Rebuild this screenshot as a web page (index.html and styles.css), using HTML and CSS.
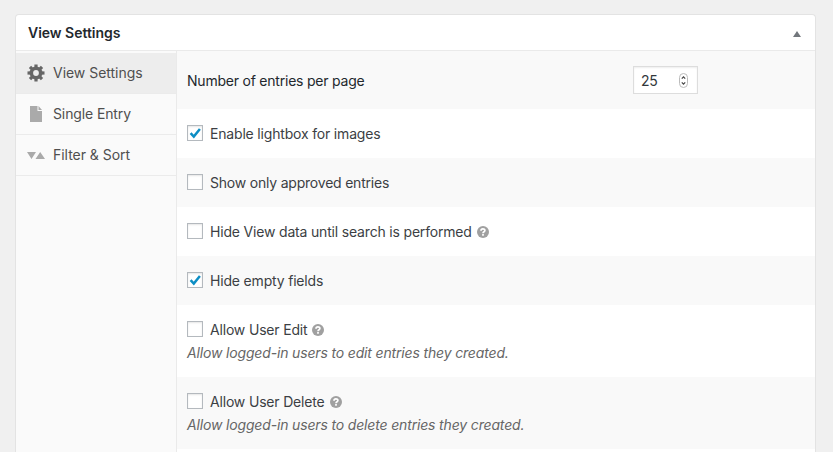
FILE: index.html
```html
<!DOCTYPE html>
<html lang="en">
<head>
<meta charset="utf-8">
<title>View Settings</title>
<link rel="stylesheet" href="styles.css">
</head>
<body>
<svg class="defs" width="0" height="0">
  <symbol id="help" viewBox="0 0 12 12"><circle cx="6" cy="6" r="6" fill="#a0a0a0"/><path d="M4 4.7C4 2.3 7.9 2.4 7.9 4.5C7.9 5.8 6 5.7 6 7.2M6 8.1V9.8" fill="none" stroke="#fff" stroke-width="1.7"/></symbol>
  <symbol id="check" viewBox="0 0 14 14"><path d="M2.6 7.1L5.8 10.5L11.9 3" fill="none" stroke="#0d8ec4" stroke-width="2.5"/></symbol>
</svg>
<section class="postbox">
  <header class="head"><h2>View Settings</h2><span class="toggle"></span></header>
  <div class="body">
    <nav class="tabs">
      <a class="tab active"><svg width="18" height="18" viewBox="0 0 18 18"><g fill="#666"><rect id="tooth" x="7.4" y=".5" width="3.2" height="17"/><use href="#tooth" transform="rotate(45 9 9)"/><use href="#tooth" transform="rotate(90 9 9)"/><use href="#tooth" transform="rotate(135 9 9)"/><circle cx="9" cy="9" r="6.5"/></g><circle cx="9" cy="9" r="2.9" fill="#ededed"/></svg><span>View Settings</span></a>
      <a class="tab"><svg width="18" height="18" viewBox="0 0 18 18"><path d="M3 1H10.5V6H15V17H3ZM11.5 1L15 5H11.5Z" fill="#aaa"/></svg><span class="entry">Single Entry</span></a>
      <a class="tab"><svg width="18" height="18" viewBox="0 0 18 18"><path d="M0 6H9L4.5 13ZM8.5 13L13.2 6L18 13Z" fill="#aaa"/></svg><span>Filter &amp; Sort</span></a>
    </nav>
    <div class="rows">
      <div class="row number"><label>Number of entries per page</label><div class="field"><span>25</span><svg width="9" height="15" viewBox="0 0 9 15"><rect x=".5" y=".5" width="8" height="14" rx="4" fill="#fff" stroke="#bbb"/><path d="M2.8 5.6L4.5 3.8L6.2 5.6M2.8 9.4L4.5 11.2L6.2 9.4" fill="none" stroke="#444" stroke-width="1.2"/></svg></div></div>
      <div class="row"><label><i class="box"><svg width="14" height="14"><use href="#check"/></svg></i><span>Enable lightbox for images</span></label></div>
      <div class="row"><label><i class="box"></i><span class="approved">Show only approved entries</span></label></div>
      <div class="row"><label><i class="box"></i><span>Hide View data until search is performed</span><svg class="help" width="12" height="12"><use href="#help"/></svg></label></div>
      <div class="row"><label><i class="box"><svg width="14" height="14"><use href="#check"/></svg></i><span>Hide empty fields</span></label></div>
      <div class="row tall"><label><i class="box"></i><span>Allow User Edit</span><svg class="help" width="12" height="12"><use href="#help"/></svg></label><p>Allow logged-in users to edit entries they created.</p></div>
      <div class="row tall"><label><i class="box"></i><span>Allow User Delete</span><svg class="help" width="12" height="12"><use href="#help"/></svg></label><p>Allow logged-in users to delete entries they created.</p></div>
    </div>
  </div>
</section>
</body>
</html>
```
FILE: styles.css
```css
* { box-sizing: border-box; }
body { margin: 0; padding: 14px 17px 0 15px; height: 452px; overflow: hidden; background: #f0f0f0; font: 14px/20px Inter, "Liberation Sans", sans-serif; letter-spacing: -.18px; color: #3c3f44; white-space: nowrap; }
svg { display: block; flex: none; }
.defs { position: absolute; }
.postbox { height: 438px; border: 1px solid #e3e3e3; border-bottom: 0; border-radius: 4px 4px 0 0; background: #fff; overflow: hidden; }
.head { height: 36px; border-bottom: 1px solid #eaeaea; padding: 0 14px 0 12px; display: flex; align-items: center; justify-content: space-between; }
h2 { margin: 0; font-size: 14px; line-height: 20px; font-weight: 600; letter-spacing: -.02px; color: #23282d; }
.toggle { border: 4px solid transparent; border-top: 0; border-bottom: 6px solid #72777c; margin-top: 3px; }
.body { display: flex; height: 401px; }
.tabs { width: 161px; padding-top: 2px; background: #fafafa; border-right: 1px solid #eaeaea; letter-spacing: -.03px; }
.entry { letter-spacing: -.12px; }
.tab { height: 41px; padding-left: 11px; display: flex; align-items: center; gap: 8px; border-bottom: 1px solid #ebebeb; color: #4f4f4f; }
.active { background: #ededed; }
.rows { flex: 1; }
.row { height: 49px; padding: 15px 10px 0; background: #fff; }
.row:nth-child(odd) { background: #f9f9f9; }
.row > label { display: flex; align-items: center; height: 20px; }
.row.number { height: 58px; padding: 15px 117px 0 10px; display: flex; justify-content: space-between; color: #23282d; letter-spacing: -.22px; }
.row.number > label { margin-top: 5px; }
.field { width: 65px; height: 28px; border: 1px solid #ddd; background: #fff; box-shadow: inset 0 1px 2px rgba(0,0,0,.07); display: flex; align-items: center; justify-content: space-between; padding: 1px 9px 0 7px; color: #32373c; }
.box { width: 16px; height: 16px; margin: -1px 7px 1px 0; border: 1px solid #b4b9be; background: #fff; box-shadow: inset 0 1px 2px rgba(0,0,0,.1); }
.approved { letter-spacing: -.21px; }
.help { margin-left: 5px; }
.row.tall { height: 72px; }
.row p { margin: 3px 0 0; font-style: italic; letter-spacing: -.16px; color: #666; line-height: 20px; }
```
